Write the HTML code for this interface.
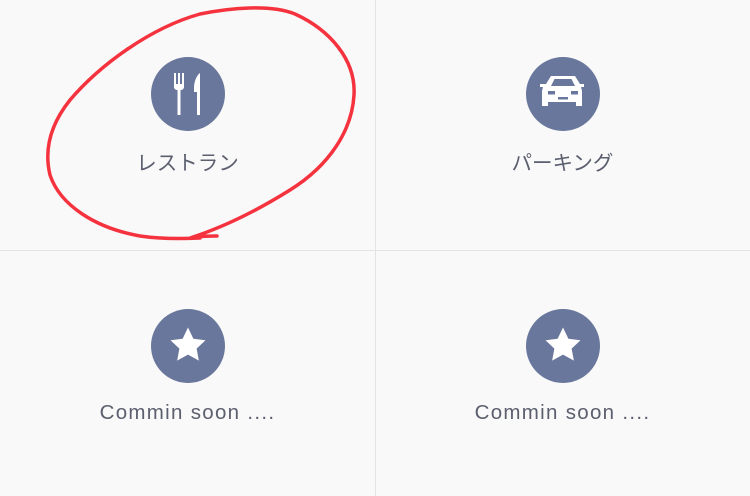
<!DOCTYPE html>
<html><head><meta charset="utf-8"><style>
html,body{margin:0;padding:0;width:750px;height:496px;background:#f9f9f9;overflow:hidden}
.c{position:absolute;width:74px;height:74px;border-radius:50%;background:#69779c}
.t{position:absolute;width:375px;text-align:center;font-family:"Liberation Sans","Noto Sans CJK JP",sans-serif;font-size:20.5px;color:#5b5f6e}
.e{letter-spacing:1.3px}
svg{position:absolute;left:0;top:0}
</style></head><body>
<div style="position:absolute;left:375px;top:0;width:1px;height:496px;background:#e3e3e3"></div>
<div style="position:absolute;left:0;top:250px;width:750px;height:1px;background:#e3e3e3"></div>
<div class="c" style="left:151px;top:57px"></div>
<div class="c" style="left:526px;top:57px"></div>
<div class="c" style="left:151px;top:309px"></div>
<div class="c" style="left:526px;top:309px"></div>
<div class="t" style="left:0;top:146px">レストラン</div>
<div class="t" style="left:375px;top:146px">パーキング</div>
<div class="t e" style="left:0;top:401px">Commin soon ....</div>
<div class="t e" style="left:375px;top:401px">Commin soon ....</div>
<svg width="750" height="496">
<g fill="#fff">
<rect x="174" y="73" width="2" height="12"/><rect x="178" y="73" width="2" height="12"/><rect x="182" y="73" width="2" height="12"/>
<path d="M174 84h10v3a3 3 0 0 1-3 3h-0.5v25h-3v-25h-0.5a3 3 0 0 1-3-3z"/>
<path d="M200 73c-3 2-6 8-6 15v4h3v23h3V73z"/>
<path d="M546 84l5-8h24l5 8h4v3h-3l1 4v15h-6v-4h-28v4h-6V91l1-4h-3v-3z M551 86h24l-3.5-7h-17z"/>
<rect x="548" y="91" width="7" height="3.5" fill="#69779c"/><rect x="571" y="91" width="7" height="3.5" fill="#69779c"/><rect x="558" y="97" width="10" height="2.5" fill="#69779c"/>
<path transform="translate(188 345) scale(1.25) translate(-188 -345)" d="M188 331l4.3 9 9.7 1.2-7.1 6.7 1.8 9.6-8.7-4.8-8.7 4.8 1.8-9.6-7.1-6.7 9.7-1.2z"/>
<path transform="translate(563 345) scale(1.25) translate(-563 -345)" d="M563 331l4.3 9 9.7 1.2-7.1 6.7 1.8 9.6-8.7-4.8-8.7 4.8 1.8-9.6-7.1-6.7 9.7-1.2z"/>
</g>
<path d="M217 236C205 236 195 237 190 238 C 215 230 250 215 290 190 C 330 165 352 130 354 95 C 356 60 330 30 295 14 C 270 4 230 8 200 14 C 150 28 100 65 70 100 C 50 125 44 150 50 175 C 60 205 95 228 140 236 C 160 239 180 239 200 238"
 fill="none" stroke="#f5333f" stroke-width="3.5" stroke-linecap="round"/>
</svg>
</body></html>
